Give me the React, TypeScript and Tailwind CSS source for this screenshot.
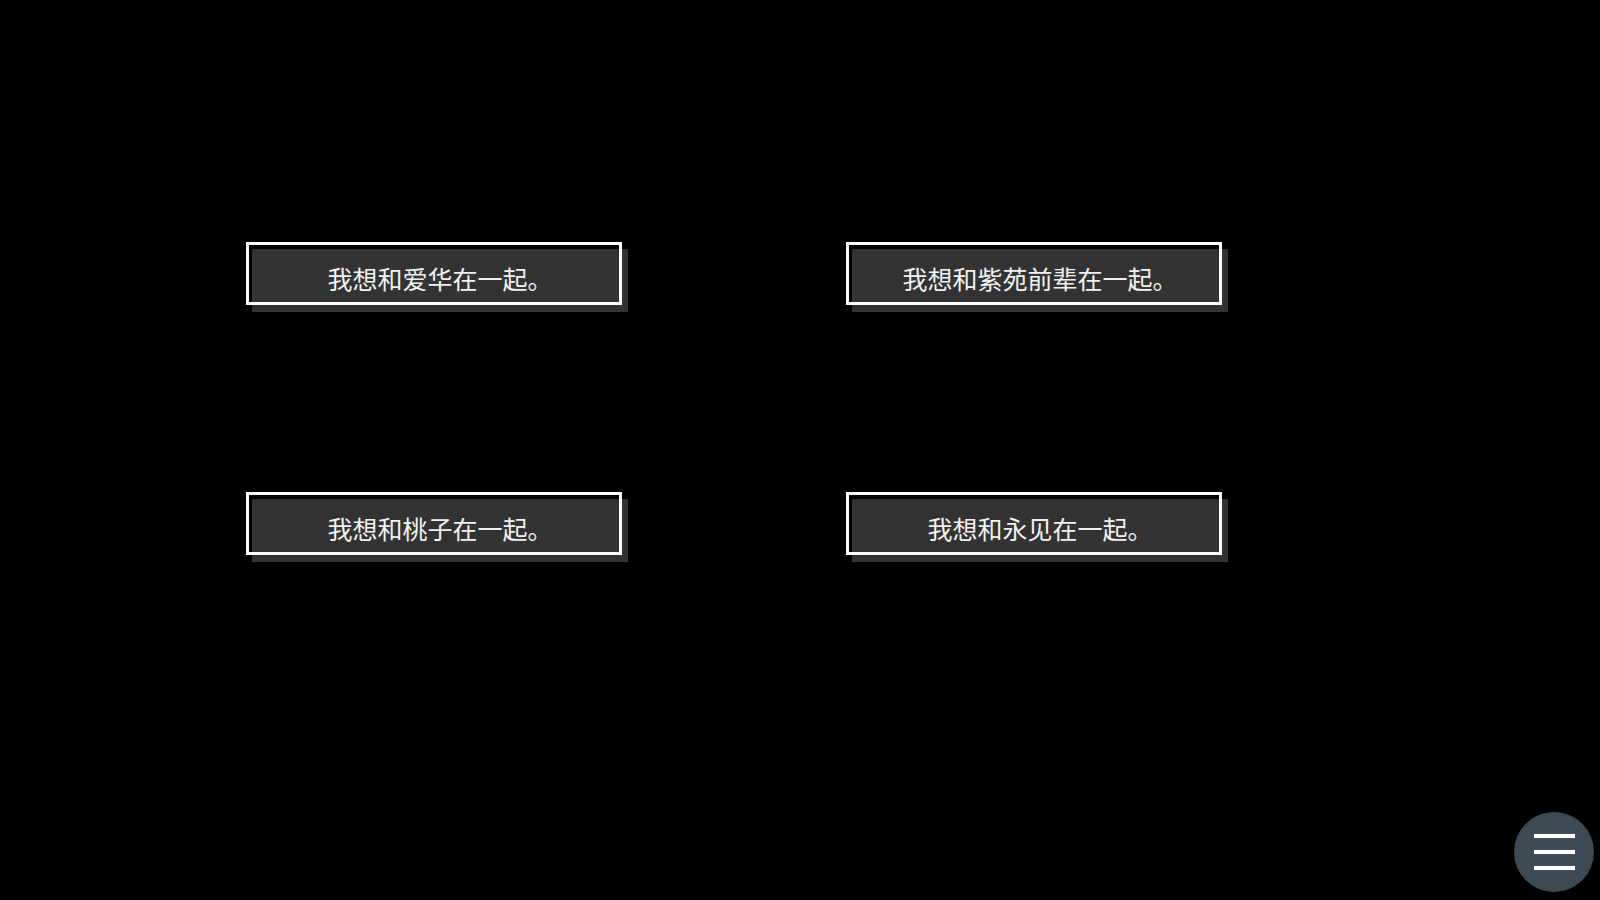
import React from 'react';

const choices: string[] = [
  '我想和爱华在一起。',
  '我想和紫苑前辈在一起。',
  '我想和桃子在一起。',
  '我想和永见在一起。',
];

const ChoiceButton: React.FC<{ label: string }> = ({ label }) => {
  return (
    <button className="relative w-[376px] h-[63px] cursor-pointer">
      {/* shadow plate */}
      <div className="absolute left-[6px] top-[7px] w-[376px] h-[63px] bg-[#333333]" />
      {/* frame */}
      <div className="absolute inset-0 border-[3px] border-white flex items-center justify-center pt-[9px] pl-[12px]">
        <span className="text-[25px] leading-none text-[#f2f2f2]">{label}</span>
      </div>
    </button>
  );
};

const App: React.FC = () => {
  return (
    <div
      className="relative w-full h-screen bg-black overflow-hidden"
      style={{ fontFamily: '"Noto Sans CJK SC", sans-serif' }}
    >
      <div className="pl-[246px] pt-[242px] grid grid-cols-[376px_376px] gap-x-[224px] gap-y-[187px]">
        {choices.map((c) => (
          <ChoiceButton key={c} label={c} />
        ))}
      </div>

      {/* Menu button */}
      <button className="absolute left-[1514px] top-[812px] w-[80px] h-[80px] rounded-full bg-[#3c4a55] flex flex-col items-center justify-center gap-[12px]">
        <span className="block w-[41px] h-[4px] bg-white shadow-[0_0_1px_rgba(200,205,210,0.8)]" />
        <span className="block w-[41px] h-[4px] bg-white shadow-[0_0_1px_rgba(200,205,210,0.8)]" />
        <span className="block w-[41px] h-[4px] bg-white shadow-[0_0_1px_rgba(200,205,210,0.8)]" />
      </button>
    </div>
  );
};

export default App;
